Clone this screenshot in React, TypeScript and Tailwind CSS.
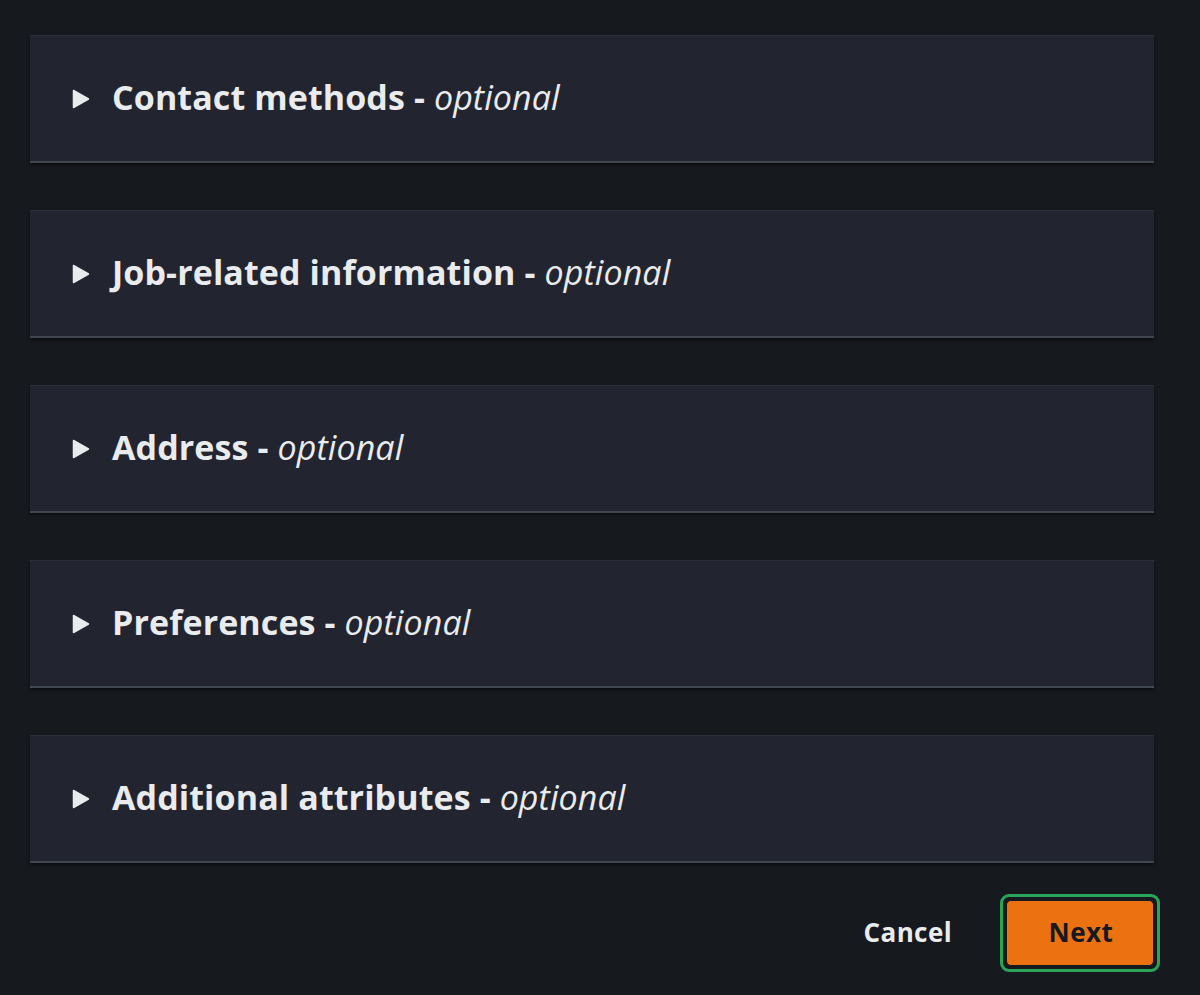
import React from 'react';

const sections = [
  'Contact methods',
  'Job-related information',
  'Address',
  'Preferences',
  'Additional attributes',
];

const Caret: React.FC = () => (
  <svg width="18" height="20" viewBox="0 0 18 20" className="shrink-0 block">
    <path d="M1.5 1.5 L16.5 10 L1.5 18.5 Z" fill="#e9ebed" stroke="#e9ebed" strokeWidth="1.5" strokeLinejoin="round" />
  </svg>
);

const Section: React.FC<{ title: string }> = ({ title }) => (
  <div className="h-[128px] bg-[#222530] border-t border-[#2a2e38] border-b-2 border-b-[#414750] shadow-[0_2px_3px_rgba(0,0,0,0.5)] flex items-center pl-[42px]">
    <Caret />
    <h2 className="ml-[22px] text-[34px] leading-none text-[#e9ebed] tracking-[0.1px] pb-[3px]">
      <span className="font-bold">{title} - </span>
      <span className="italic font-normal">optional</span>
    </h2>
  </div>
);

export default function App() {
  return (
    <div className="min-h-[995px] w-[1200px] bg-[#161a1f] pt-[35px] pl-[30px] pr-[46px] font-['Open_Sans','Noto_Sans',sans-serif]">
      <div className="flex flex-col gap-[47px]">
        {sections.map((s) => (
          <Section key={s} title={s} />
        ))}
      </div>
      <div className="flex items-center justify-end mt-[31px] mr-[-6px]">
        <button className="text-[#e9ebed] font-bold text-[26px] tracking-[0.4px] mr-[48px] pb-[2px]">Cancel</button>
        <div className="rounded-[9px] border-[3px] border-[#29a55a] p-[3px]">
          <button className="w-[148px] h-[66px] rounded-[5px] bg-[#ec7211] border border-[#16191f] text-[#16191f] font-bold text-[26px] tracking-[0.5px] flex items-center justify-center pb-[2px] pl-[2px]">
            Next
          </button>
        </div>
      </div>
    </div>
  );
}
